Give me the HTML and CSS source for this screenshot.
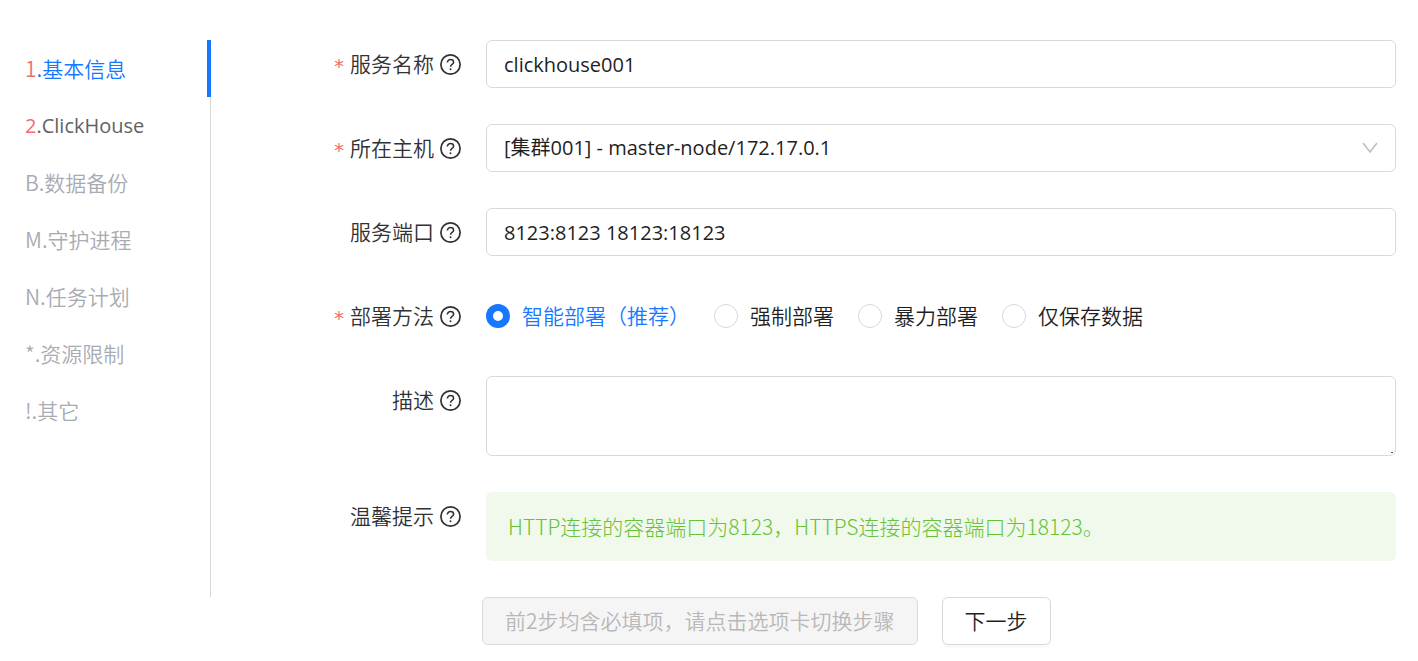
FILE: index.html
```
<!DOCTYPE html>
<html lang="zh-CN">
<head>
    <meta charset="UTF-8">
    <meta name="viewport" content="width=device-width, initial-scale=1.0">
    <title>ClickHouse</title>
    <link rel="stylesheet" href="styles.css">
</head>
<body>
    <svg class="symbols" aria-hidden="true">
        <symbol id="question" viewBox="0 0 21 21">
            <circle cx="10.5" cy="10.5" r="9.6" fill="none" stroke="currentColor" stroke-width="1.7"/>
            <path d="M7.4 8.5 C7.4 6.6 8.8 5.6 10.5 5.6 C12.2 5.6 13.6 6.6 13.6 8.3 C13.6 10.5 10.5 10.4 10.5 12.8" fill="none" stroke="currentColor" stroke-width="1.5"/>
            <circle cx="10.5" cy="15.3" r="1" fill="currentColor"/>
        </symbol>
    </svg>

    <form id="serviceForm">
        <div class="content">
            <nav class="tabs">
                <button type="button" class="tab active"><span class="num">1</span>.基本信息</button>
                <button type="button" class="tab required"><span class="num">2</span>.ClickHouse</button>
                <button type="button" class="tab">B.数据备份</button>
                <button type="button" class="tab">M.守护进程</button>
                <button type="button" class="tab">N.任务计划</button>
                <button type="button" class="tab">*.资源限制</button>
                <button type="button" class="tab">!.其它</button>
            </nav>

            <div class="fields">
                <div class="row">
                    <label class="label" for="serviceName"><span class="star">*</span><span>服务名称</span><svg class="help"><use href="#question"/></svg></label>
                    <input class="control" type="text" id="serviceName" name="serviceName" value="clickhouse001">
                </div>

                <div class="row">
                    <label class="label" for="host"><span class="star">*</span><span>所在主机</span><svg class="help"><use href="#question"/></svg></label>
                    <div class="select-box">
                        <select class="control" id="host" name="host">
                            <option>[集群001] - master-node/172.17.0.1</option>
                        </select>
                        <svg class="arrow" viewBox="0 0 16 12"><path d="M1 1 L8 10 L15 1" fill="none" stroke="currentColor" stroke-width="1.6"/></svg>
                    </div>
                </div>

                <div class="row">
                    <label class="label" for="port"><span>服务端口</span><svg class="help"><use href="#question"/></svg></label>
                    <input class="control" type="text" id="port" name="port" value="8123:8123 18123:18123">
                </div>

                <div class="row" role="radiogroup" aria-labelledby="deployLabel">
                    <span class="label" id="deployLabel"><span class="star">*</span><span>部署方法</span><svg class="help"><use href="#question"/></svg></span>
                    <div class="radios">
                        <label class="radio"><input type="radio" name="deploy" value="smart" checked><span>智能部署（推荐）</span></label>
                        <label class="radio"><input type="radio" name="deploy" value="force"><span>强制部署</span></label>
                        <label class="radio"><input type="radio" name="deploy" value="violent"><span>暴力部署</span></label>
                        <label class="radio"><input type="radio" name="deploy" value="save"><span>仅保存数据</span></label>
                    </div>
                </div>

                <div class="row">
                    <label class="label" for="description"><span>描述</span><svg class="help"><use href="#question"/></svg></label>
                    <textarea class="control" id="description" name="description"></textarea>
                </div>

                <div class="row">
                    <span class="label"><span>温馨提示</span><svg class="help"><use href="#question"/></svg></span>
                    <p class="tip">HTTP连接的容器端口为8123，HTTPS连接的容器端口为18123。</p>
                </div>
            </div>
        </div>

        <div class="actions">
            <button type="submit" class="btn" disabled>前2步均含必填项，请点击选项卡切换步骤</button>
            <button type="button" class="btn">下一步</button>
        </div>
    </form>
</body>
</html>
```

FILE: styles.css
```
* {
    box-sizing: border-box;
}

body {
    margin: 0;
    padding: 40px 22px 16px 0;
    background-color: white;
    color: #303133;
}

body,
button,
input,
select,
textarea {
    font-family: "Noto Sans CJK SC", sans-serif;
    font-size: 21px;
    font-weight: 350;
    line-height: 30px;
}

.symbols {
    display: none;
}

.content {
    display: flex;
}

/* left tabs */
.tabs {
    display: flex;
    flex-direction: column;
    flex: none;
    width: 211px;
    border-right: 1px solid #d9d9d9;
}

.tab {
    height: 57px;
    margin-right: -1px;
    padding: 0 25px 2px;
    border: none;
    border-right: 4px solid transparent;
    background: none;
    color: #a8abb2;
    text-align: left;
    cursor: pointer;
}

.tab.required {
    padding-bottom: 0;
    color: #606266;
}

.tab.active {
    color: #1677ff;
    border-right-color: #1677ff;
}

.num,
.star {
    color: #f56c6c;
}

/* form rows */
.fields {
    display: flex;
    flex-direction: column;
    flex: 1;
    gap: 36px;
    min-width: 0;
    padding-bottom: 36px;
}

.row {
    display: flex;
    align-items: flex-start;
    gap: 25px;
}

.label {
    display: flex;
    flex: none;
    align-items: center;
    justify-content: flex-end;
    width: 250px;
    height: 48px;
}

.label span,
.radio span {
    padding-bottom: 2px;
}

.label .star {
    margin-right: 5px;
    padding: 4px 0 0;
    font-family: "DejaVu Sans Mono", monospace;
    font-size: 20px;
}

.help {
    width: 21px;
    height: 21px;
    margin-left: 6px;
}

.control {
    flex: 1;
    width: 100%;
    min-width: 0;
    height: 48px;
    padding: 0 17px;
    border: 1px solid #d9d9d9;
    border-radius: 6px;
    outline: none;
    background-color: white;
    color: #1f1f1f;
}

.control,
.tab.required {
    font-family: "Open Sans", "Noto Sans CJK SC", sans-serif;
    font-size: 20px;
    font-weight: 400;
}

.control:focus {
    border-color: #1677ff;
}

.select-box {
    position: relative;
    flex: 1;
}

select.control {
    display: block;
    appearance: none;
}

.arrow {
    position: absolute;
    top: 18px;
    right: 18px;
    width: 16px;
    height: 12px;
    color: #bfbfbf;
    pointer-events: none;
}

textarea.control {
    height: 80px;
    padding: 8px 17px;
    resize: vertical;
}

textarea::-webkit-resizer {
    background: linear-gradient(#555, #555) no-repeat right 2px bottom 2px / 2px 1px;
}

.radios {
    display: flex;
    flex-wrap: wrap;
    gap: 24px;
    min-height: 48px;
}

.radio {
    display: flex;
    align-items: center;
    gap: 12px;
    color: #1f1f1f;
    cursor: pointer;
}

.radio input {
    appearance: none;
    width: 24px;
    height: 24px;
    margin: 0;
    border: 1px solid #d9d9d9;
    border-radius: 50%;
    background-color: white;
}

.radio input:checked {
    border: 7px solid #1677ff;
}

.radio input:checked + span {
    color: #1677ff;
}

.tip {
    flex: 1;
    margin: 0;
    padding: 19px 22px 20px;
    border-radius: 6px;
    background-color: #f0f9eb;
    color: #67c23a;
    font-weight: 300;
}

/* bottom buttons */
.actions {
    display: flex;
    gap: 24px;
    padding-left: 482px;
}

.btn {
    height: 48px;
    padding: 0 22px 2px;
    border: 1px solid #d9d9d9;
    border-radius: 6px;
    background-color: white;
    box-shadow: 0 3px 0 rgba(0, 0, 0, 0.02);
    color: #1f1f1f;
    cursor: pointer;
}

.btn:disabled {
    background-color: #f5f5f5;
    box-shadow: none;
    color: #b8b8b8;
    cursor: not-allowed;
}
```
